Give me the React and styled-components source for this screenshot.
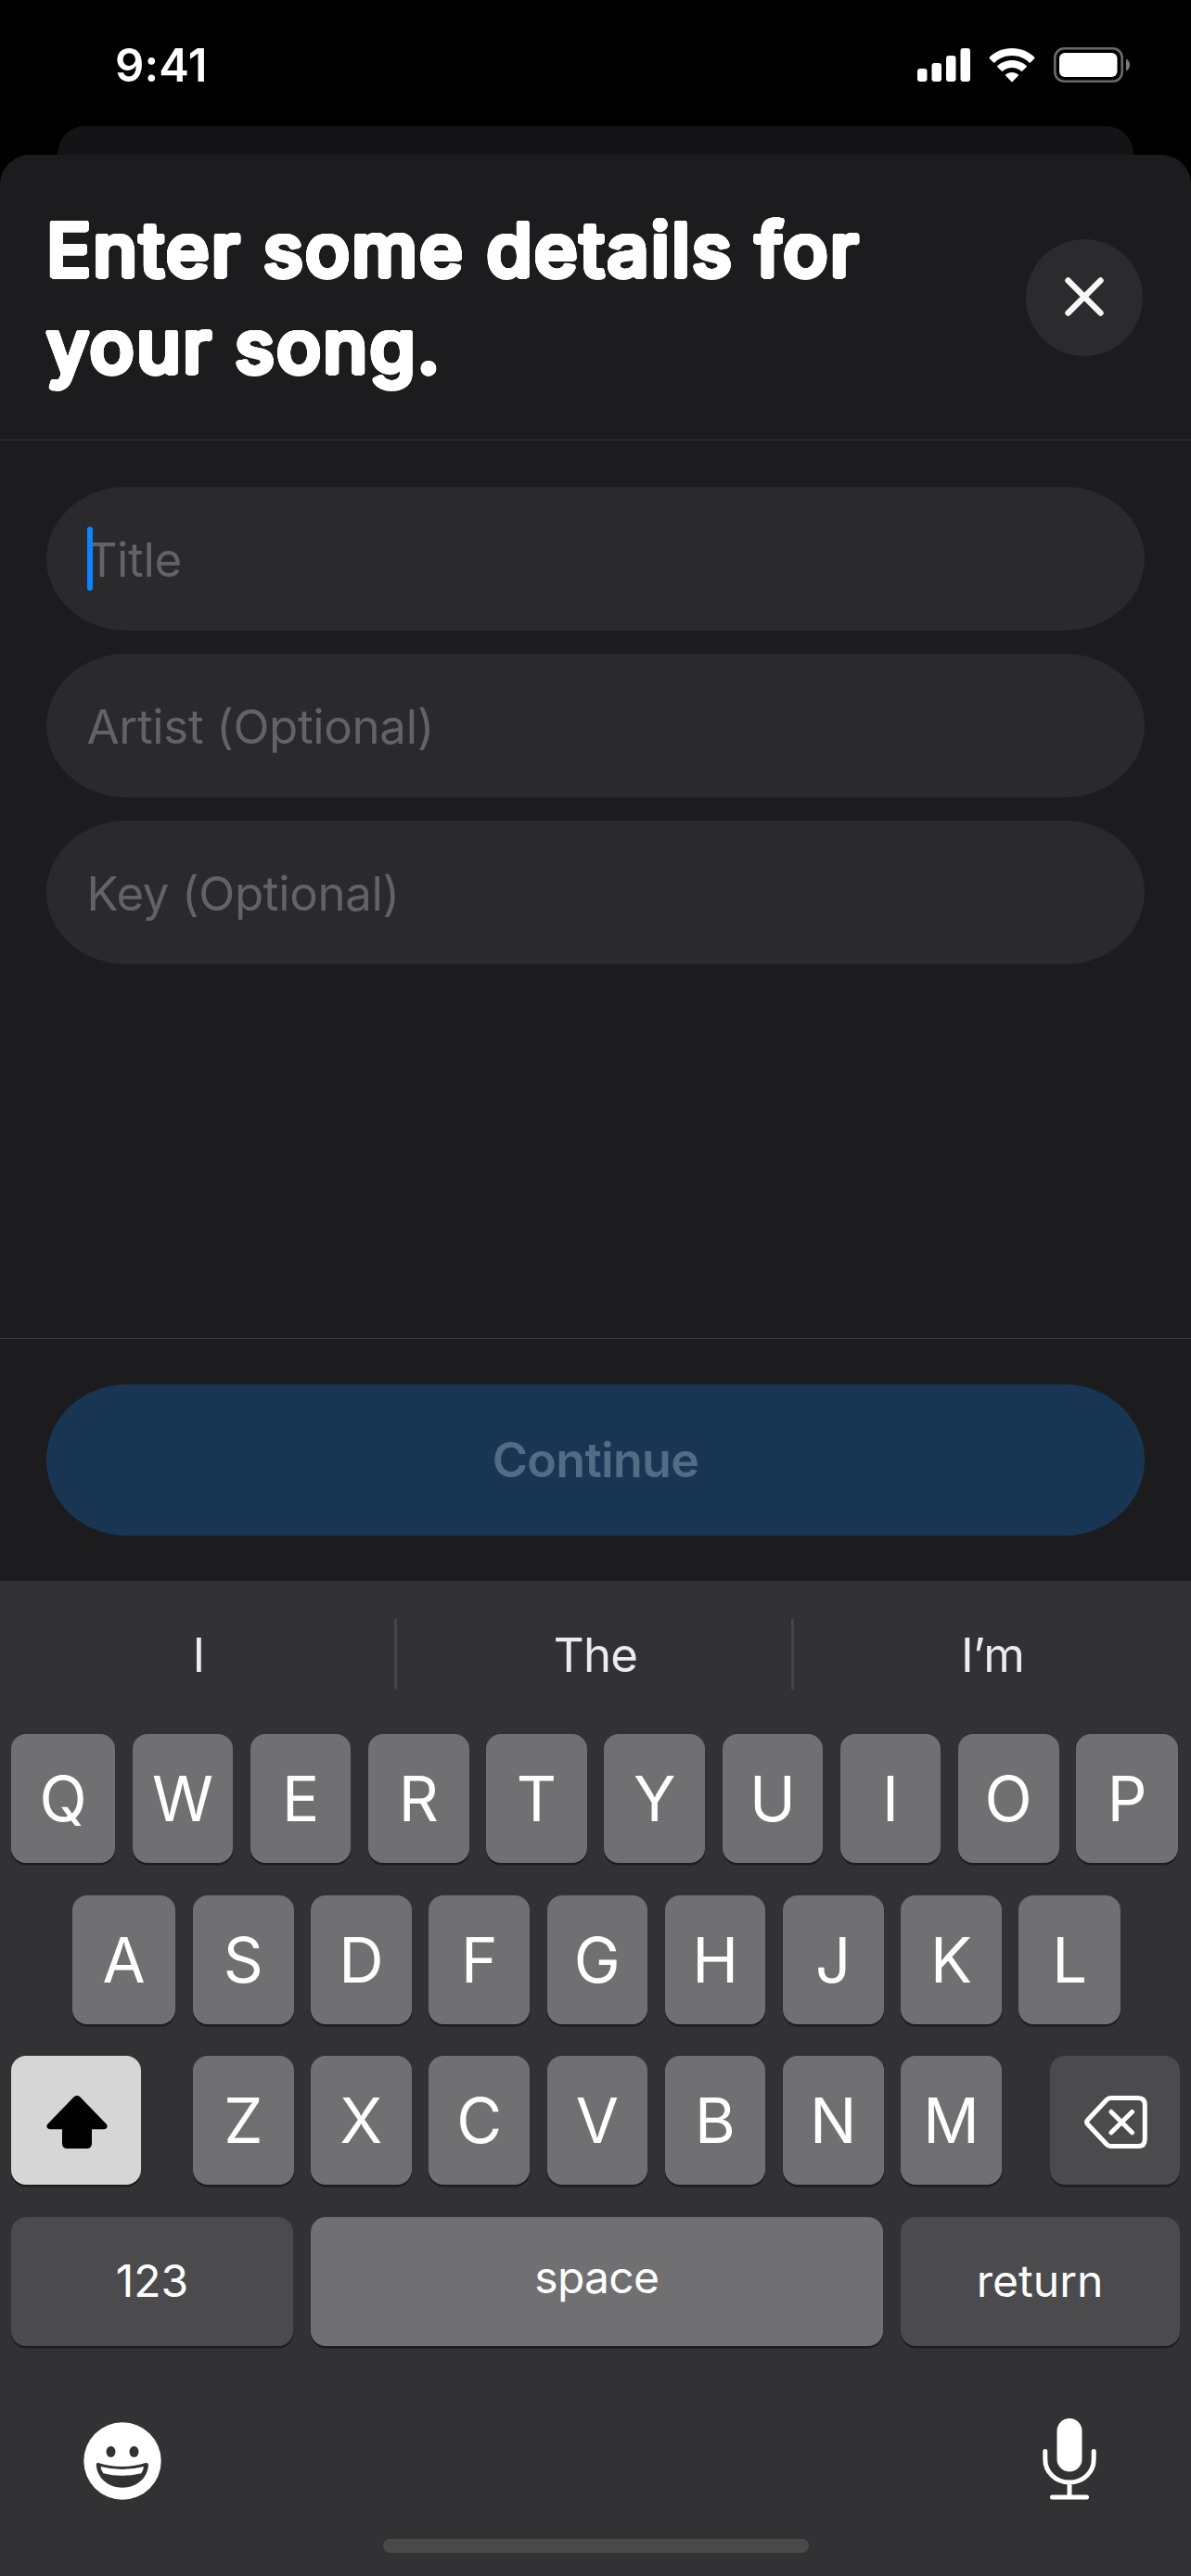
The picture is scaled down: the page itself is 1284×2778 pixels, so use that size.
import React from "react";
import styled, { createGlobalStyle, css } from "styled-components";

const GlobalStyle = createGlobalStyle`
  * { box-sizing: border-box; }
  body {
    margin: 0;
    background: #000;
    font-family: Inter, "Liberation Sans", sans-serif;
    color: #fff;
  }
  button, input { font: inherit; color: inherit; border: 0; margin: 0; padding: 0; }
  svg { display: block; flex: none; }
`;

// A ring of hard shadows thickens the glyphs and rounds their corners.
const ring = (radius, color) =>
  Array.from({ length: 24 }, (_, i) => {
    const a = (i / 24) * Math.PI * 2;
    return `${(Math.cos(a) * radius).toFixed(2)}px ${(Math.sin(a) * radius).toFixed(2)}px 0 ${color}`;
  }).join(", ");

const Screen = styled.div`
  display: flex;
  flex-direction: column;
  width: 1284px;
  height: 2778px;
  overflow: hidden;
  background: #000;
`;

const StatusBar = styled.div`
  display: flex;
  justify-content: space-between;
  align-items: center;
  height: 136px;
  padding: 4px 66px 0 124px;
`;

const Time = styled.div`
  padding-top: 1px;
  font-size: 49px;
  font-weight: 600;
  line-height: 60px;
  letter-spacing: 0.2px;
`;

const StatusIcons = styled.div`
  display: flex;
  align-items: center;
  gap: 20px;
`;

const BackSheet = styled.div`
  flex: none;
  height: 31px;
  margin: 0 62px;
  border-radius: 30px 30px 0 0;
  background: #141416;
`;

const Sheet = styled.main`
  display: flex;
  flex-direction: column;
  flex: none;
  height: 1538px;
  border-radius: 32px 32px 0 0;
  background: #1c1c1e;
`;

const Header = styled.header`
  display: flex;
  justify-content: space-between;
  align-items: center;
  height: 308px;
  padding: 0 52px 0 50px;
  border-bottom: 1px solid #353537;
`;

const Heading = styled.h1`
  margin: 0;
  width: 960px;
  padding-top: 1px;
  font-size: 80px;
  font-weight: 450;
  line-height: 104.5px;
  letter-spacing: 1.95px;
  text-shadow: ${ring(2.5, "#fff")};
`;

const CloseButton = styled.button`
  display: flex;
  align-items: center;
  justify-content: center;
  width: 126px;
  height: 126px;
  border-radius: 50%;
  background: #2b2b2d;
`;

const Form = styled.form`
  display: flex;
  flex-direction: column;
  gap: 25px;
  flex: 1;
  padding: 50px 50px 0;
`;

const pill = css`
  border-radius: 86px / 50%;
`;

const Field = styled.label`
  ${pill}
  display: flex;
  align-items: center;
  height: 155px;
  padding: 1px 44px 0 43.5px;
  background: #2a2a2c;
`;

const Caret = styled.span`
  width: 6px;
  height: 69px;
  margin: 0 -6px 1px 0;
  border-radius: 3px;
  background: #0a84ff;
  position: relative;
  z-index: 1;
`;

const Input = styled.input`
  flex: 1;
  height: 80px;
  outline: 0;
  background: transparent;
  font-size: 51px;
  letter-spacing: -0.35px;
  &::placeholder { color: #636366; opacity: 1; }
`;

const Footer = styled.footer`
  height: 262px;
  padding: 49px 50px 0;
  border-top: 1px solid #39393b;
`;

const ContinueButton = styled.button`
  ${pill}
  display: block;
  width: 100%;
  height: 163px;
  background: #183654;
  color: #536b85;
  font-size: 52px;
  font-weight: 600;
  letter-spacing: -0.7px;
`;

const Keyboard = styled.section`
  display: flex;
  flex-direction: column;
  flex: 1;
  background: #323234;
`;

const Suggestions = styled.div`
  display: grid;
  grid-template-columns: repeat(3, 1fr);
  align-items: center;
  height: 165px;
  padding-bottom: 7px;
`;

const Suggestion = styled.div`
  height: 76px;
  padding: 1px 0 0 3px;
  line-height: 76px;
  text-align: center;
  font-size: 51px;
  letter-spacing: -0.8px;
  color: #ececee;
  border-right: 3px solid #464648;
  &:last-child { border-right: 0; padding-left: 0; }
`;

const Rows = styled.div`
  display: flex;
  flex-direction: column;
  gap: 34.3px;
  padding: 0 12px;
`;

const Row = styled.div`
  display: flex;
  gap: 18.6px;
  padding-left: ${(p) => p.$indent || 0}px;
`;

const tones = {
  letter: "#707072",
  dark: "#4b4b4d",
  light: "#d6d6d6",
};

const Key = styled.button`
  display: flex;
  flex: none;
  align-items: center;
  justify-content: center;
  width: ${(p) => p.$w || 108.6}px;
  height: 139.3px;
  padding: ${(p) => p.$drop || 0}px 0 ${(p) => p.$lift || 0}px ${(p) => p.$nudge || 0}px;
  margin-left: ${(p) => p.$push || 0}px;
  border-radius: 16px;
  background: ${(p) => tones[p.$tone || "letter"]};
  box-shadow: 0 2.5px 0 #1d1d1f;
  font-size: ${(p) => p.$size || 67}px;
  letter-spacing: ${(p) => p.$track || 0}px;
  line-height: 1;
`;

const BottomBar = styled.div`
  display: flex;
  justify-content: space-between;
  align-items: flex-end;
  padding: 77.5px 102px 0 89.5px;
`;

const HomeIndicator = styled.div`
  width: 459px;
  height: 15px;
  margin: 42.5px auto 0;
  border-radius: 8px;
  background: #4a4a4b;
`;

const Signal = () => (
  <svg width="57" height="36" viewBox="0 0 57 36" fill="#fff">
    <rect x="0" y="22" width="10.5" height="14" rx="3" />
    <rect x="15.5" y="16" width="10.5" height="20" rx="3" />
    <rect x="31" y="8" width="10.5" height="28" rx="3" />
    <rect x="46.5" y="0" width="10.5" height="36" rx="3" />
  </svg>
);

const Wifi = () => (
  <svg width="50" height="37" viewBox="0 0 50 37" fill="#fff">
    <path d="M25 0C34.500 0 43.200 3.700 49.300 9.700Q49.900 10.300 49.300 10.900L44.900 15.400Q44.300 15.900 43.700 15.400C38.700 10.700 32.200 8 25 8S11.300 10.700 6.300 15.400Q5.700 15.900 5.100 15.400L.7 10.900Q.1 10.300.7 9.700C6.800 3.700 15.500 0 25 0Z" />
    <path d="M25 12.900C31.100 12.900 36.600 15.200 40.700 19Q41.300 19.600 40.700 20.200L36.300 24.600Q35.700 25.100 35.100 24.700C32.400 22.300 28.900 20.900 25 20.900S17.600 22.300 14.900 24.700Q14.300 25.100 13.700 24.600L9.300 20.200Q8.700 19.600 9.300 19C13.400 15.200 18.900 12.900 25 12.900Z" />
    <path d="M25 25.900C27.700 25.900 30.100 26.800 31.900 28.400Q32.500 29 31.900 29.600L25.700 36Q25 36.700 24.300 36L18.100 29.600Q17.500 29 18.100 28.400C19.900 26.800 22.300 25.900 25 25.900Z" />
  </svg>
);

const Battery = () => (
  <svg width="82" height="38" viewBox="0 0 82 38">
    <rect x="1.300" y="1.300" width="72.400" height="35.400" rx="10" fill="none" stroke="#6a6a6a" strokeWidth="2.600" />
    <rect x="6" y="6" width="62.500" height="26" rx="6" fill="#fff" />
    <path d="M78 12.500C80.500 13.500 82 16 82 19S80.500 24.500 78 25.500Z" fill="#7a7a7a" />
  </svg>
);

const Cross = () => (
  <svg width="44" height="44" viewBox="0 0 44 44" fill="none" stroke="#f7f7f7" strokeWidth="6.400" strokeLinecap="round">
    <path d="M4.500 3.500L39.500 38.500M39.500 3.500L4.500 38.500" />
  </svg>
);

const ShiftArrow = () => (
  <svg width="66" height="57" viewBox="0 0 66 57" fill="#000">
    <path d="M29.500 1.500Q33 -1.300 36.500 1.500L64.500 30.500Q66.300 32.700 65.200 34.600Q64.300 36.200 62 36.200H49V51Q49 57 43.500 57H22.500Q17 57 17 51V36.200H4Q1.700 36.200.8 34.600Q-.3 32.700 1.500 30.500Z" />
  </svg>
);

const Backspace = () => (
  <svg width="68" height="57" viewBox="0 0 68 57" fill="none" stroke="#fff" strokeWidth="5" strokeLinecap="round" strokeLinejoin="round">
    <path d="M28.500 2.500H58Q65.300 2.500 65.300 10V47Q65.300 54.500 58 54.500H28.500Q26 54.500 24 52.500L3.800 31Q1.500 28.500 3.800 26L24 4.500Q26 2.500 28.500 2.500Z" />
    <path d="M29 17.500L51.500 39.800M51.500 17.500L29 39.800" />
  </svg>
);

const Smiley = () => (
  <svg width="84" height="84" viewBox="0 0 84 84">
    <circle cx="42" cy="42" r="41.700" fill="#fff" />
    <g fill="#323234">
      <ellipse cx="29.500" cy="32" rx="5" ry="6" />
      <ellipse cx="54.500" cy="32" rx="5" ry="6" />
      <path d="M16 44Q41.500 52 67 44Q70 43.500 70 47C68.500 61 57 70.700 42 70.700S15.500 61 13.800 47Q13.500 43.300 16 44Z" />
    </g>
    <path d="M18.500 48Q41.500 54 65 48Q64.500 52.500 62.300 55.200Q41.500 60.500 21.500 55.200Q19 52.500 18.500 48Z" fill="#fff" />
  </svg>
);

const Mic = () => (
  <svg width="58" height="88" viewBox="0 0 58 88" fill="none" stroke="#fff" strokeWidth="5" strokeLinecap="round">
    <rect x="15.500" y="0" width="27" height="57.500" rx="13.500" fill="#fff" stroke="none" />
    <path d="M2.800 35.500V44C2.800 58 14 69 29 69S55.200 58 55.200 44V35.500M29 69V85M10.500 85H47.500" />
  </svg>
);

const keysOf = (letters, first, last) =>
  [...letters].map((c, i) => (
    <Key key={c} type="button" $w={i === 0 ? first : i === letters.length - 1 ? last : undefined}>
      {c}
    </Key>
  ));

export default function App() {
  return (
    <Screen>
      <GlobalStyle />
      <StatusBar>
        <Time>9:41</Time>
        <StatusIcons>
          <Signal />
          <Wifi />
          <Battery />
        </StatusIcons>
      </StatusBar>
      <BackSheet />
      <Sheet>
        <Header>
          <Heading>
            Enter some details for
            <br />
            your song.
          </Heading>
          <CloseButton type="button" aria-label="Close">
            <Cross />
          </CloseButton>
        </Header>
        <Form>
          <Field>
            <Caret />
            <Input placeholder="Title" />
          </Field>
          <Field>
            <Input placeholder="Artist (Optional)" />
          </Field>
          <Field>
            <Input placeholder="Key (Optional)" />
          </Field>
        </Form>
        <Footer>
          <ContinueButton type="button">Continue</ContinueButton>
        </Footer>
      </Sheet>
      <Keyboard>
        <Suggestions>
          <Suggestion>I</Suggestion>
          <Suggestion>The</Suggestion>
          <Suggestion>I’m</Suggestion>
        </Suggestions>
        <Rows>
          <Row>{keysOf("QWERTYUIOP", 112, 110)}</Row>
          <Row $indent={66}>{keysOf("ASDFGHJKL", 111.4, 110)}</Row>
          <Row>
            <Key type="button" $w={140} $tone="light" $drop={2.5} $nudge={2.5} aria-label="Shift">
              <ShiftArrow />
            </Key>
            <Key type="button" $push={37.4}>Z</Key>
            {keysOf("XCVBNM")}
            <Key type="button" $w={140} $push={33.8} $tone="dark" $drop={2.5} $nudge={1} aria-label="Delete">
              <Backspace />
            </Key>
          </Row>
          <Row>
            <Key type="button" $w={304} $tone="dark" $size={48}>123</Key>
            <Key type="button" $w={617.4} $size={48} $lift={8} $track={-0.7}>space</Key>
            <Key type="button" $w={301} $tone="dark" $size={48}>return</Key>
          </Row>
        </Rows>
        <BottomBar>
          <Smiley />
          <Mic />
        </BottomBar>
        <HomeIndicator />
      </Keyboard>
    </Screen>
  );
}
